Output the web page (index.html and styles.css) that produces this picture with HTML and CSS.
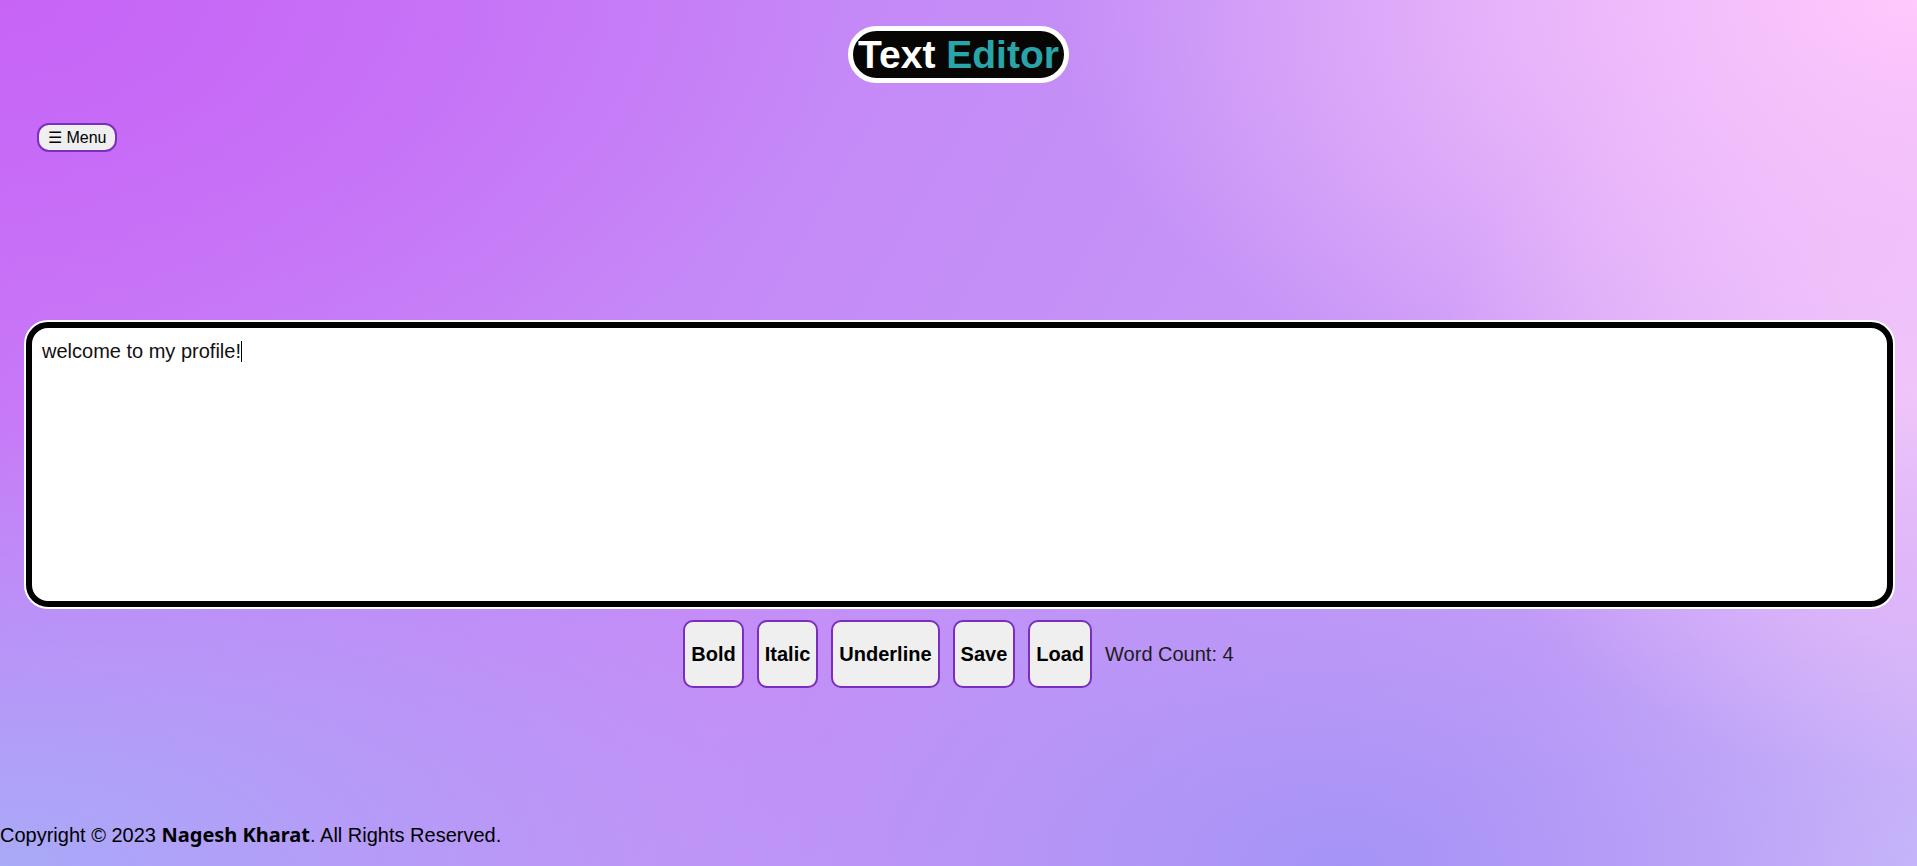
FILE: index.html
```html
<!DOCTYPE html>
<html lang="en">
<head>
<meta charset="utf-8">
<title>Text Editor</title>
<link rel="stylesheet" href="styles.css">
</head>
<body>
  <header class="header">
    <h1 class="title"><span class="title-a">Text</span> <span class="title-b">Editor</span></h1>
  </header>
  <nav class="nav">
    <button class="menu-btn">☰ Menu</button>
  </nav>
  <main class="main">
    <div class="editor" contenteditable="true">welcome to my profile!<span class="caret"></span></div>
    <div class="toolbar">
      <button class="tool-btn">Bold</button>
      <button class="tool-btn">Italic</button>
      <button class="tool-btn">Underline</button>
      <button class="tool-btn">Save</button>
      <button class="tool-btn">Load</button>
      <span class="word-count">Word Count: 4</span>
    </div>
  </main>
  <footer class="footer">Copyright © 2023 <b class="author">Nagesh Kharat</b>. All Rights Reserved.</footer>
</body>
</html>
```
FILE: styles.css
```css
html, body {
  margin: 0;
  padding: 0;
}
body {
  min-height: 100vh;
  display: flex;
  flex-direction: column;
  font-family: "Liberation Sans", Arial, sans-serif;
  color: #000;
  background-color: #c08ef7;
  background-image:
    radial-gradient(ellipse 45% 55% at 100% 0%, #ffc9fc 0%, rgba(255, 201, 252, 0.6) 45%, rgba(255, 201, 252, 0) 100%),
    radial-gradient(ellipse 25% 45% at 100% 45%, rgba(240, 200, 250, 0.9) 0%, rgba(240, 200, 250, 0) 100%),
    radial-gradient(ellipse 45% 55% at 0% 0%, #c764f7 0%, rgba(199, 100, 247, 0) 100%),
    radial-gradient(ellipse 45% 50% at 0% 100%, #a9aaf8 0%, rgba(169, 170, 248, 0) 100%),
    radial-gradient(ellipse 35% 45% at 70% 100%, #a594f6 0%, rgba(165, 148, 246, 0) 100%),
    radial-gradient(ellipse 25% 40% at 100% 100%, #cbbafa 0%, rgba(203, 186, 250, 0) 100%),
    linear-gradient(120deg, #c877f7 0%, #c490f7 50%, #d2a8f8 100%);
}

.header {
  display: flex;
  justify-content: center;
  padding-top: 26px;
}
.title {
  margin: 0;
  font-size: 39px;
  line-height: 45px;
  font-weight: bold;
  background: #070605;
  border: 5px solid #ffffff;
  border-radius: 30px;
  padding: 1px 5px;
  white-space: nowrap;
}
.title-a {
  color: #ffffff;
}
.title-b {
  color: #2aa3a9;
}

.nav {
  padding: 40px 0 0 37px;
}
.menu-btn {
  font-family: "Liberation Sans", Arial, sans-serif;
  font-size: 16px;
  line-height: 18px;
  color: #000;
  background: #efefef;
  border: 2px solid #7a2fbf;
  border-radius: 12px;
  padding: 3px 9px;
  height: 29px;
  cursor: pointer;
}

.main {
  display: flex;
  flex-direction: column;
  padding-top: 170px;
}
.editor {
  margin: 0 24px 0 26px;
  height: 249px;
  background: #ffffff;
  border: 6px solid #000000;
  border-radius: 22px;
  box-shadow: 0 0 0 2px #ffffff;
  padding: 12px 10px;
  box-sizing: content-box;
  font-size: 20px;
  line-height: 23px;
  color: #111;
  outline: none;
}
.caret {
  display: inline-block;
  width: 1px;
  height: 21px;
  background: #000;
  vertical-align: -4px;
}

.toolbar {
  display: flex;
  justify-content: center;
  align-items: center;
  gap: 13px;
  margin-top: 13px;
}
.tool-btn {
  font-family: "Liberation Sans", Arial, sans-serif;
  font-size: 20px;
  font-weight: bold;
  line-height: 22px;
  color: #000;
  background: #efefef;
  border: 2px solid #7a2dbf;
  border-radius: 10px;
  padding: 21px 6px;
  cursor: pointer;
}
.word-count {
  font-size: 20px;
  color: #1c1c1c;
}

.footer {
  margin-top: auto;
  padding-bottom: 19px;
  font-size: 20px;
  line-height: 23px;
  color: #000;
}
.author {
  font-family: "Noto Sans", "DejaVu Sans", sans-serif;
  font-weight: bold;
}
```
